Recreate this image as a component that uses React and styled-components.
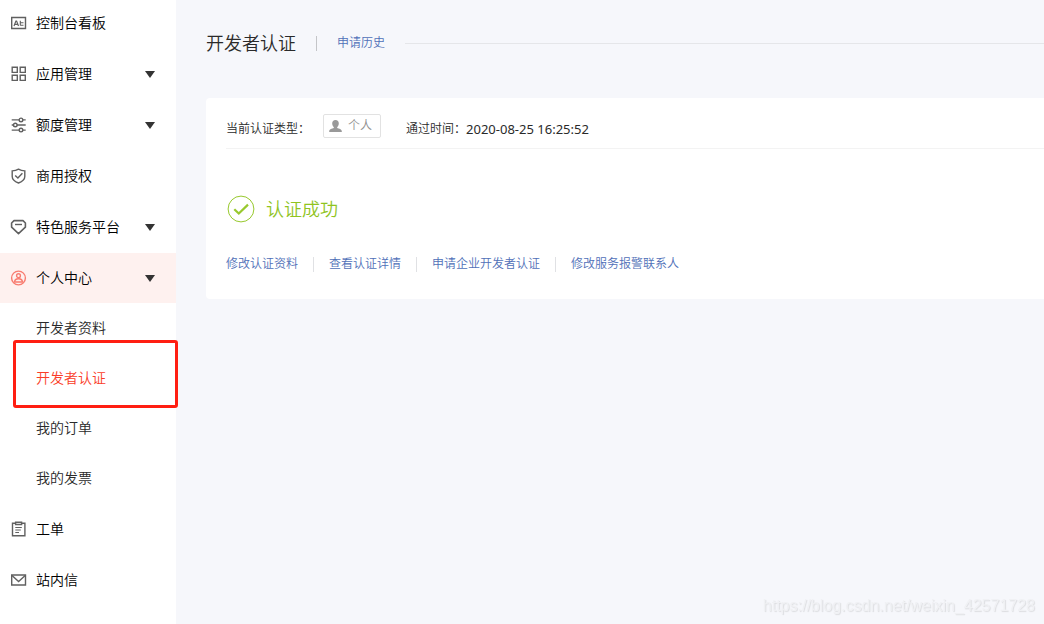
import React from 'react';
import styled, { createGlobalStyle } from 'styled-components';

const GlobalStyle = createGlobalStyle`
  * {
    box-sizing: border-box;
  }

  body {
    margin: 0;
    background: #f6f7fb;
    color: #2a2a2a;
    font-family: "Noto Sans", "Noto Sans CJK SC", sans-serif;
    font-size: 14px;
    font-weight: 350;
  }

  a {
    text-decoration: none;
  }
`;

const Page = styled.div`
  display: flex;
  min-height: 100vh;
`;

const Sidebar = styled.nav`
  flex: 0 0 176px;
  background: #fff;
`;

const Menu = styled.ul`
  display: flex;
  flex-direction: column;
  gap: 1px;
  margin: 0;
  padding: 0;
  list-style: none;

  > li:first-child > a {
    height: 48px;
    padding-bottom: 2px;
  }
`;

const MenuLink = styled.a`
  display: flex;
  align-items: center;
  gap: 9px;
  height: 50px;
  padding: 0 21px 0 10px;
  color: #000;
  background: ${props => (props.$active ? '#fef1ef' : 'transparent')};

  > svg {
    flex: none;
    color: ${props => (props.$active ? '#f87c70' : '#606060')};
  }
`;

const Label = styled.span`
  flex: 1;
  line-height: 20px;
`;

const Caret = styled.i`
  border: 5px solid transparent;
  border-top: 7px solid #333;
  border-bottom: 0;
`;

const SubMenu = styled.ul`
  margin: 0;
  padding: 0;
  list-style: none;
`;

const SubItem = styled.li`
  position: relative;
`;

const SubLink = styled.a`
  display: flex;
  align-items: center;
  height: 50px;
  padding-left: 36px;
  line-height: 20px;
  color: ${props => (props.$active ? '#fa3d28' : '#2a2a2a')};
`;

const Marker = styled.span`
  position: absolute;
  z-index: 1;
  top: -13px;
  right: -2px;
  bottom: -5px;
  left: 13px;
  border: 3px solid #ff1e12;
  border-radius: 3px;
  pointer-events: none;
`;

const Main = styled.main`
  flex: 1;
  min-width: 0;
  padding: 28px 0 0 30px;
`;

const Header = styled.header`
  display: flex;
  align-items: center;
  height: 30px;
  margin-bottom: 40px;
`;

const Title = styled.h1`
  margin: 0;
  font-size: 18px;
  font-weight: 350;
  line-height: 30px;
`;

const Divider = styled.span`
  width: 1px;
  height: 15px;
  margin: ${props => props.$margin};
  background: ${props => props.$color};
`;

const TextLink = styled.a`
  font-size: 12px;
  line-height: 20px;
  color: #5070b8;
`;

const Rule = styled.span`
  flex: 1;
  height: 1px;
  margin-left: 20px;
  background: #e5e6e9;
`;

const Card = styled.section`
  padding: 0 0 25px 20px;
  background: #fff;
  border-radius: 4px 0 0 4px;
`;

const Info = styled.div`
  display: flex;
  align-items: center;
  height: 51px;
  padding-top: 12px;
  border-bottom: 1px solid #f3f3f3;
  font-size: 12px;
  line-height: 20px;
`;

const Tag = styled.span`
  display: flex;
  align-items: center;
  gap: 6px;
  height: 24px;
  margin: 0 25px 6px 13px;
  padding: 0 8px 0 5px;
  border: 1px solid #e2e2e2;
  border-radius: 2px;
  color: #909090;
`;

const Time = styled.time`
  font-size: 13px;
  font-weight: 400;
`;

const Result = styled.div`
  display: flex;
  align-items: center;
  gap: 11px;
  margin: 46px 0 31px 1px;
  font-size: 18px;
  line-height: 28px;
  color: #90c41f;
`;

const Actions = styled.div`
  display: flex;
  align-items: center;
`;

const Watermark = styled.span`
  position: fixed;
  right: 9px;
  bottom: 8px;
  font-family: "Liberation Sans", sans-serif;
  font-size: 16px;
  font-weight: 400;
  line-height: 20px;
  color: #f0f1f4;
  text-shadow: 1px 1px 1px #dcdde0;
`;

const Icon = ({ children }) => (
  <svg width="17" height="16" viewBox="0 0 17 16" fill="none" stroke="currentColor" strokeWidth="1.4" aria-hidden="true">
    {children}
  </svg>
);

const icons = {
  board: (
    <Icon>
      <path d="M1.7 2.5h13.8v11H1.7z" />
      <path d="M4 11l1.900-5h.7l1.900 5M4.800 9.400h3" strokeWidth="1.200" />
      <path d="M10.300 5.800v4.700M10.300 7.700h3.200M10.300 10.300h3.200" strokeWidth="1.100" />
    </Icon>
  ),
  apps: (
    <Icon>
      <path d="M2.2 1.3h5.1v5.1H2.2zM10.2 1.3h5.1v5.1h-5.1zM2.2 9.3h5.1v5.1H2.2zM10.2 9.3h5.1v5.1h-5.1z" />
    </Icon>
  ),
  sliders: (
    <Icon>
      <path d="M1.7 2.9h7.5M12.6 2.9h3.1M1.7 8h1.8M7 8h8.7M1.7 13.1h7.5M12.6 13.1h3.1" />
      <circle cx="11" cy="2.9" r="1.8" />
      <circle cx="5.3" cy="8" r="1.8" />
      <circle cx="11" cy="13.1" r="1.8" />
    </Icon>
  ),
  shield: (
    <Icon>
      <path d="M8.5 1.2C6.6 2.3 4.5 2.8 2.2 2.9v5.6c0 3 2.4 5 6.3 6.5 3.9-1.5 6.3-3.5 6.3-6.5V2.9C12.5 2.8 10.4 2.3 8.5 1.2z" />
      <path d="M5.2 7.5l2.7 2.6 4.5-4.8" />
    </Icon>
  ),
  gem: (
    <Icon>
      <path d="M4 1.6h9L15.4 4v4.2L8.5 14.6 1.6 8.2V4z" strokeLinejoin="round" strokeWidth="1.6" />
      <path d="M5 5.5h7" />
    </Icon>
  ),
  user: (
    <Icon>
      <circle cx="8.5" cy="8" r="6.9" />
      <circle cx="8.5" cy="5.7" r="1.9" />
      <path d="M4.6 12c0-2.3 1.5-3.3 3.9-3.3s3.9 1 3.9 3.3z" />
    </Icon>
  ),
  ticket: (
    <Icon>
      <path d="M5.5 2.3h-3v12.4h12.4V2.3h-3" />
      <path d="M5.6 1.2h6v2.3h-6z" />
      <path d="M5.3 6.5h6.5M5.3 9h5.5M5.3 11.5h3.7" strokeWidth="1.2" />
    </Icon>
  ),
  mail: (
    <Icon>
      <path d="M1.7 3h13.800v10H1.7z" />
      <path d="M2 3.5l6.6 6 6.6-6" />
    </Icon>
  ),
};

const menu = [
  { icon: 'board', text: '控制台看板' },
  { icon: 'apps', text: '应用管理', caret: true },
  { icon: 'sliders', text: '额度管理', caret: true },
  { icon: 'shield', text: '商用授权' },
  { icon: 'gem', text: '特色服务平台', caret: true },
  {
    icon: 'user',
    text: '个人中心',
    caret: true,
    active: true,
    children: ['开发者资料', '开发者认证', '我的订单', '我的发票'],
  },
  { icon: 'ticket', text: '工单' },
  { icon: 'mail', text: '站内信' },
];

const actions = ['修改认证资料', '查看认证详情', '申请企业开发者认证', '修改服务报警联系人'];

const current = '开发者认证';

const SideMenu = () => (
  <Sidebar>
    <Menu>
      {menu.map(item => (
        <li key={item.text}>
          <MenuLink href="#" $active={item.active}>
            {icons[item.icon]}
            <Label>{item.text}</Label>
            {item.caret && <Caret />}
          </MenuLink>
          {item.children && (
            <SubMenu>
              {item.children.map(text => (
                <SubItem key={text}>
                  <SubLink href="#" $active={text === current}>{text}</SubLink>
                  {text === current && <Marker />}
                </SubItem>
              ))}
            </SubMenu>
          )}
        </li>
      ))}
    </Menu>
  </Sidebar>
);

const App = () => (
  <>
    <GlobalStyle />
    <Page>
      <SideMenu />
      <Main>
        <Header>
          <Title>{current}</Title>
          <Divider $margin="0 20px" $color="#c4c5c8" />
          <TextLink href="#">申请历史</TextLink>
          <Rule />
        </Header>
        <Card>
          <Info>
            <span>当前认证类型：</span>
            <Tag>
              <svg width="13" height="12" viewBox="0 0 13 12" fill="#999" aria-hidden="true">
                <path d="M6.5 0C8.6 0 9.8 1.4 9.8 3.4c0 1.5-.7 2.9-1.6 3.5v1c1.8.7 4.6 1 4.6 3.3V12H.2v-.8c0-2.3 2.8-2.6 4.6-3.3v-1C3.9 6.3 3.2 4.9 3.2 3.4 3.2 1.4 4.4 0 6.5 0z" />
              </svg>
              个人
            </Tag>
            <span>通过时间：</span>
            <Time>2020-08-25 16:25:52</Time>
          </Info>
          <Result>
            <svg width="28" height="28" viewBox="0 0 28 28" fill="none" stroke="#98c92e" aria-hidden="true">
              <circle cx="14" cy="14" r="12.9" />
              <path d="M7.3 14.2l4.5 4.3 9.2-8.9" strokeWidth="2.2" />
            </svg>
            认证成功
          </Result>
          <Actions>
            {actions.map((text, i) => (
              <React.Fragment key={text}>
                {i > 0 && <Divider $margin="0 15px" $color="#e0e1e4" />}
                <TextLink href="#">{text}</TextLink>
              </React.Fragment>
            ))}
          </Actions>
        </Card>
      </Main>
      <Watermark>https://blog.csdn.net/weixin_42571728</Watermark>
    </Page>
  </>
);

export default App;
